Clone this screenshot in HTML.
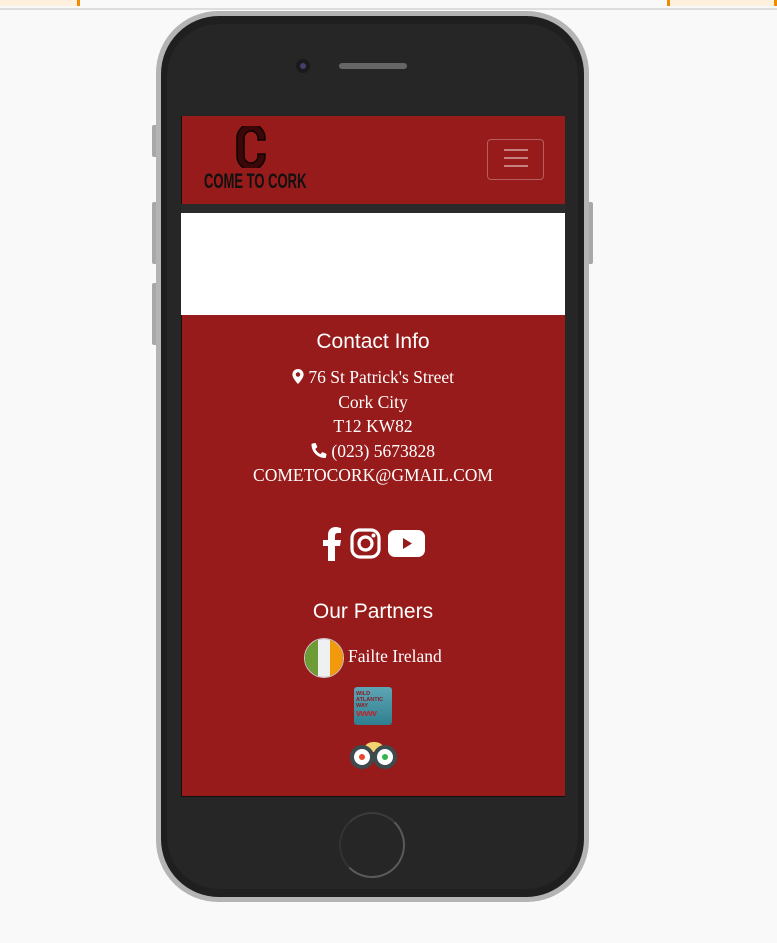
<!DOCTYPE html>
<html><head><meta charset="utf-8"><style>
*{margin:0;padding:0;box-sizing:border-box}
body{width:777px;height:943px;background:#f9f9f9;position:relative;overflow:hidden;font-family:"Liberation Serif",serif}
.a{position:absolute}
.t{position:absolute;left:181px;width:384px;text-align:center;color:#fff}
</style></head><body>
<div class="a" style="left:0;top:0;width:78px;height:6px;background:#fdf0dc"></div>
<div class="a" style="left:77px;top:0;width:3px;height:6px;background:#f08a00"></div>
<div class="a" style="left:668px;top:0;width:109px;height:6px;background:#fdf0dc"></div>
<div class="a" style="left:667px;top:0;width:3px;height:6px;background:#f08a00"></div>
<div class="a" style="left:774px;top:0;width:3px;height:6px;background:#f08a00"></div>
<div class="a" style="left:0;top:8px;width:777px;height:2px;background:#ddd"></div>
<div class="a" style="left:152px;top:125px;width:6px;height:32px;background:#a8a8a8;border-radius:2px"></div>
<div class="a" style="left:152px;top:202px;width:6px;height:62px;background:#a8a8a8;border-radius:2px"></div>
<div class="a" style="left:152px;top:283px;width:6px;height:62px;background:#a8a8a8;border-radius:2px"></div>
<div class="a" style="left:587px;top:202px;width:6px;height:62px;background:#a8a8a8;border-radius:2px"></div>
<div class="a" style="left:156px;top:11px;width:433px;height:891px;border-radius:62px;background:#b4b4b4"></div>
<div class="a" style="left:161px;top:16px;width:423px;height:881px;border-radius:58px;background:#1f1f1f"></div>
<div class="a" style="left:167px;top:24px;width:411px;height:865px;border-radius:52px;background:#262626"></div>
<div class="a" style="left:296px;top:59px;width:14px;height:14px;border-radius:50%;background:#1a1a1a"></div>
<div class="a" style="left:300px;top:63px;width:6px;height:6px;border-radius:50%;background:#4a3d6e"></div>
<div class="a" style="left:339px;top:63px;width:68px;height:6px;border-radius:3px;background:#666"></div>
<div class="a" style="left:339px;top:812px;width:66px;height:66px;border-radius:50%;border:2px solid #5a5a5a;border-left-color:#333;border-top-color:#3a3a3a"></div>
<div class="a" style="left:181px;top:116px;width:384px;height:681px;background:#961b1a;border-left:1px solid #111;border-bottom:1px solid #111"></div>
<div class="a" style="left:181px;top:204px;width:384px;height:9px;background:#2a2a2a"></div>
<div class="a" style="left:181px;top:213px;width:384px;height:102px;background:#fff"></div>
<!-- logo -->
<svg class="a" style="left:236px;top:126px" width="30" height="42" viewBox="0 0 30 42"><path d="M29 14H22V12a7 7 0 00-14 0v18a7 7 0 0014 0v-2h7v2a14 14 0 01-28 0V12a14 14 0 0128 0z" fill="#3a0808" stroke="#120202" stroke-width="1.5"/></svg>
<div class="a" style="left:204px;top:170px;font-family:'Liberation Sans',sans-serif;font-weight:bold;font-size:21px;color:#111;transform:scaleX(0.62);transform-origin:left;white-space:nowrap">COME TO CORK</div>
<div class="a" style="left:487px;top:139px;width:57px;height:41px;border:1px solid rgba(255,255,255,.3);border-radius:4px"></div>
<div class="a" style="left:504px;top:149px;width:24px;height:2px;background:rgba(255,255,255,.45);box-shadow:0 8px 0 rgba(255,255,255,.45),0 16px 0 rgba(255,255,255,.45)"></div>
<div class="t" style="top:330px;font-family:'Liberation Sans',sans-serif;font-size:21px;">Contact Info</div>
<div class="t" style="top:365px;font-size:17.5px;line-height:24.5px">
<div><svg width="12" height="15" viewBox="0 0 12 16" style="vertical-align:-1px"><path d="M6 0C2.7 0 0 2.6 0 5.9 0 10 6 16 6 16s6-6 6-10.1C12 2.6 9.3 0 6 0zm0 8.3a2.4 2.4 0 110-4.8 2.4 2.4 0 010 4.8z" fill="#fff"/></svg> 76 St Patrick's Street</div>
<div>Cork City</div><div>T12 KW82</div>
<div><svg width="16" height="15" viewBox="0 0 16 16" style="vertical-align:-1px"><path d="M15.5 11.3l-3.5-1.5a.8.8 0 00-.9.2l-1.5 1.9A11.6 11.6 0 014 6.3l1.9-1.5a.8.8 0 00.2-.9L4.6.5A.8.8 0 003.7 0L.6.7A.8.8 0 000 1.5C0 9.5 6.5 16 14.5 16a.8.8 0 00.8-.6l.7-3.2a.8.8 0 00-.5-.9z" fill="#fff"/></svg> (023) 5673828</div>
<div>COMETOCORK@GMAIL.COM</div>
</div>
<svg class="a" style="left:322px;top:527px" width="20" height="34" viewBox="0 0 20 34"><path d="M13 34V19h5l1-6h-6V9c0-2 1-3 3-3h3V1c-1 0-3-1-5-1-5 0-8 3-8 8v5H1v6h5v15z" fill="#fff"/></svg>
<svg class="a" style="left:350px;top:528px" width="31" height="31" viewBox="0 0 31 31"><rect x="2" y="2" width="27" height="27" rx="8" fill="none" stroke="#fff" stroke-width="3.2"/><circle cx="15.5" cy="15.5" r="6.5" fill="none" stroke="#fff" stroke-width="3.2"/><circle cx="23.5" cy="7.5" r="2" fill="#fff"/></svg>
<svg class="a" style="left:388px;top:530px" width="37" height="27" viewBox="0 0 37 27"><rect x="0" y="0" width="37" height="27" rx="7" fill="#fff"/><path d="M15 8v11l9-5.5z" fill="#961b1a"/></svg>
<div class="t" style="top:600px;font-family:'Liberation Sans',sans-serif;font-size:21px">Our Partners</div>
<div class="a" style="left:304px;top:638px;width:40px;height:40px;border-radius:50%;overflow:hidden;display:flex;border:1px solid #ccc">
<div style="flex:1;background:#6d9b35"></div><div style="flex:1;background:#eef0f2"></div><div style="flex:1;background:#f39a0c"></div></div>
<div class="a" style="left:348px;top:646px;color:#fff;font-size:17.5px">Failte Ireland</div>
<div class="a" style="left:354px;top:687px;width:38px;height:38px;border-radius:3px;background:linear-gradient(#5ea6b5,#2f7f90);font-family:'Liberation Sans',sans-serif;font-size:5.5px;line-height:6px;color:#8a1d24;padding:4px 2px;font-weight:bold">WILD<br>ATLANTIC<br>WAY<div style="color:#c0262e;font-size:9px;letter-spacing:-1px;margin-top:1px">vvvvv</div></div>
<div class="a" style="left:363px;top:742px;width:22px;height:10px;border-radius:11px 11px 0 0;background:#f3d270"></div>
<div class="a" style="left:350px;top:745px;width:24px;height:24px;border-radius:50%;background:#fff;border:4px solid #3d4b4f"></div>
<div class="a" style="left:373px;top:745px;width:24px;height:24px;border-radius:50%;background:#fff;border:4px solid #3d4b4f"></div>
<div class="a" style="left:359px;top:754px;width:6px;height:6px;border-radius:50%;background:#e8462d"></div>
<div class="a" style="left:382px;top:754px;width:6px;height:6px;border-radius:50%;background:#34b44a"></div>
</body></html>
